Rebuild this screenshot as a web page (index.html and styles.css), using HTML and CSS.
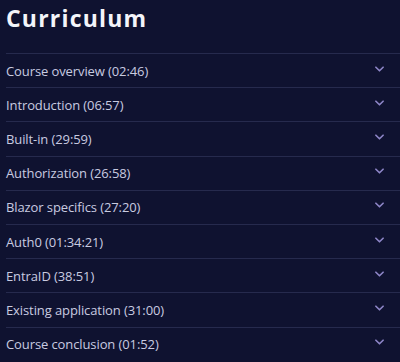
FILE: index.html
```html
<!DOCTYPE html>
<html>
<head>
<meta charset="utf-8">
<link rel="stylesheet" href="styles.css">
</head>
<body>
<section class="curriculum">
  <h2 class="title">Curriculum</h2>
  <ul class="list">
    <li class="item"><span class="label">Course overview (02:46)</span><svg class="chev" viewBox="0 0 10 6" width="9" height="6"><path d="M1 1 L5 5 L9 1" /></svg></li>
    <li class="item"><span class="label">Introduction (06:57)</span><svg class="chev" viewBox="0 0 10 6" width="9" height="6"><path d="M1 1 L5 5 L9 1" /></svg></li>
    <li class="item"><span class="label">Built-in (29:59)</span><svg class="chev" viewBox="0 0 10 6" width="9" height="6"><path d="M1 1 L5 5 L9 1" /></svg></li>
    <li class="item"><span class="label">Authorization (26:58)</span><svg class="chev" viewBox="0 0 10 6" width="9" height="6"><path d="M1 1 L5 5 L9 1" /></svg></li>
    <li class="item"><span class="label">Blazor specifics (27:20)</span><svg class="chev" viewBox="0 0 10 6" width="9" height="6"><path d="M1 1 L5 5 L9 1" /></svg></li>
    <li class="item"><span class="label">Auth0 (01:34:21)</span><svg class="chev" viewBox="0 0 10 6" width="9" height="6"><path d="M1 1 L5 5 L9 1" /></svg></li>
    <li class="item"><span class="label">EntraID (38:51)</span><svg class="chev" viewBox="0 0 10 6" width="9" height="6"><path d="M1 1 L5 5 L9 1" /></svg></li>
    <li class="item"><span class="label">Existing application (31:00)</span><svg class="chev" viewBox="0 0 10 6" width="9" height="6"><path d="M1 1 L5 5 L9 1" /></svg></li>
    <li class="item"><span class="label">Course conclusion (01:52)</span><svg class="chev" viewBox="0 0 10 6" width="9" height="6"><path d="M1 1 L5 5 L9 1" /></svg></li>
  </ul>
</section>
</body>
</html>
```
FILE: styles.css
```css
html, body {
  margin: 0;
  padding: 0;
  background: #0f1230;
}
body {
  font-family: "Open Sans", "DejaVu Sans", sans-serif;
  color: #c9cbe0;
  overflow: hidden;
}
.curriculum {
  padding: 0 0 0 6px;
}
.title {
  margin: 0;
  height: 53px;
  box-sizing: border-box;
  padding-top: 2px;
  font-size: 23px;
  font-weight: 700;
  color: #f4f5fa;
  line-height: 32px;
  letter-spacing: 1.2px;
}
.list {
  list-style: none;
  margin: 0;
  padding: 0;
}
.item {
  display: flex;
  align-items: center;
  justify-content: space-between;
  height: 33.2px;
  border-top: 1px solid #262a4d;
  padding-right: 16px;
  font-size: 13px;
}
.label {
  letter-spacing: -0.1px;
}
.chev {
  fill: none;
  stroke: #8e86c8;
  stroke-width: 1.8;
  stroke-linecap: round;
  stroke-linejoin: round;
  margin-top: -4px;
}
```
